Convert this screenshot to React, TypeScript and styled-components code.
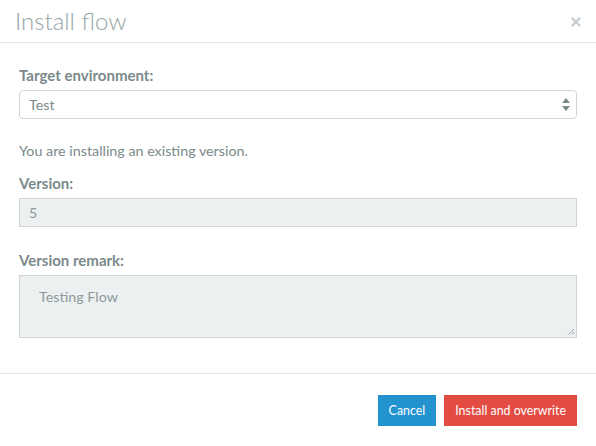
import React from "react";
import styled, { createGlobalStyle } from "styled-components";

const Global = createGlobalStyle`
  html, body { margin: 0; padding: 0; background: #fff; }
  body { font-family: Lato, "Open Sans", sans-serif; font-size: 14.3px; color: #7b8a8b; }
  * { box-sizing: border-box; }
`;

const Modal = styled.div`
  width: 596px;
  height: 446px;
  display: flex;
  flex-direction: column;
  background: #fff;
`;

const Header = styled.div`
  height: 43px;
  border-bottom: 1px solid #e5e5e5;
  display: flex;
  align-items: flex-start;
  justify-content: space-between;
  padding: 0 14px 0 15px;
`;

const Title = styled.h4`
  margin: 0;
  font-size: 24px;
  font-weight: 300;
  line-height: 41px;
  color: #95a5a6;
`;

const Close = styled.span`
  font-size: 21px;
  font-weight: 700;
  color: #c3cacb;
  line-height: 42px;
`;

const Body = styled.div`
  padding: 22px 19px 0 19px;
  height: 331px;
  border-bottom: 1px solid #e5e5e5;
`;

const Label = styled.div`
  font-weight: 700;
  font-size: 15px;
  line-height: 20px;
  margin-bottom: 5px;
`;

const Group = styled.div<{ $mb?: number }>`
  margin-bottom: ${(p) => p.$mb ?? 18}px;
`;

const SelectBox = styled.div`
  height: 29px;
  border: 1px solid #cfd4d6;
  border-radius: 4px;
  display: flex;
  align-items: center;
  justify-content: space-between;
  padding: 0 6px 0 9px;
  color: #7b8a8b;
  font-size: 14.3px;
`;

const Input = styled.div`
  height: 29px;
  border: 1px solid #cfd4d6;
  background: #ecf0f1;
  display: flex;
  align-items: center;
  padding: 0 9px;
  font-size: 14.3px;
  color: #8e9a9b;
`;

const TextArea = styled.div`
  position: relative;
  height: 63px;
  border: 1px solid #cfd4d6;
  background: #ecf0f1;
  padding: 11px 19px;
  font-size: 14.3px;
  line-height: 20px;
  color: #8e9a9b;
`;

const Grip = styled.svg`
  position: absolute;
  right: 1px;
  bottom: 1px;
`;

const Info = styled.p`
  margin: 0 0 12px 0;
  line-height: 20px;
`;

const Footer = styled.div`
  display: flex;
  justify-content: flex-end;
  gap: 8px;
  padding: 21px 19px 0 19px;
`;

const Button = styled.button<{ $variant: "info" | "danger" }>`
  height: 31px;
  border: none;
  padding: 0 11px;
  font-family: Lato, "Open Sans", sans-serif;
  font-size: 12.4px;
  color: #fff;
  background: ${(p) => (p.$variant === "info" ? "#2393d0" : "#e34c43")};
`;

export default function App() {
  return (
    <Modal>
      <Global />
      <Header>
        <Title>Install flow</Title>
        <Close>×</Close>
      </Header>
      <Body>
        <Group $mb={22}>
          <Label>Target environment:</Label>
          <SelectBox>
            <span>Test</span>
            <svg width="8" height="13" viewBox="0 0 8 13">
              <path d="M4 0 L8 5 L0 5 Z" fill="#7b8a8b" />
              <path d="M0 8 L8 8 L4 13 Z" fill="#7b8a8b" />
            </svg>
          </SelectBox>
        </Group>
        <Info>You are installing an existing version.</Info>
        <Group $mb={23}>
          <Label>Version:</Label>
          <Input>5</Input>
        </Group>
        <Group $mb={0}>
          <Label>Version remark:</Label>
          <TextArea>
            Testing Flow
            <Grip width="9" height="9" viewBox="0 0 9 9">
              <path d="M8 2 L2 8 M8 5 L5 8" stroke="#6d7778" strokeWidth="1" strokeDasharray="1 1" />
            </Grip>
          </TextArea>
        </Group>
      </Body>
      <Footer>
        <Button $variant="info">Cancel</Button>
        <Button $variant="danger">Install and overwrite</Button>
      </Footer>
    </Modal>
  );
}
